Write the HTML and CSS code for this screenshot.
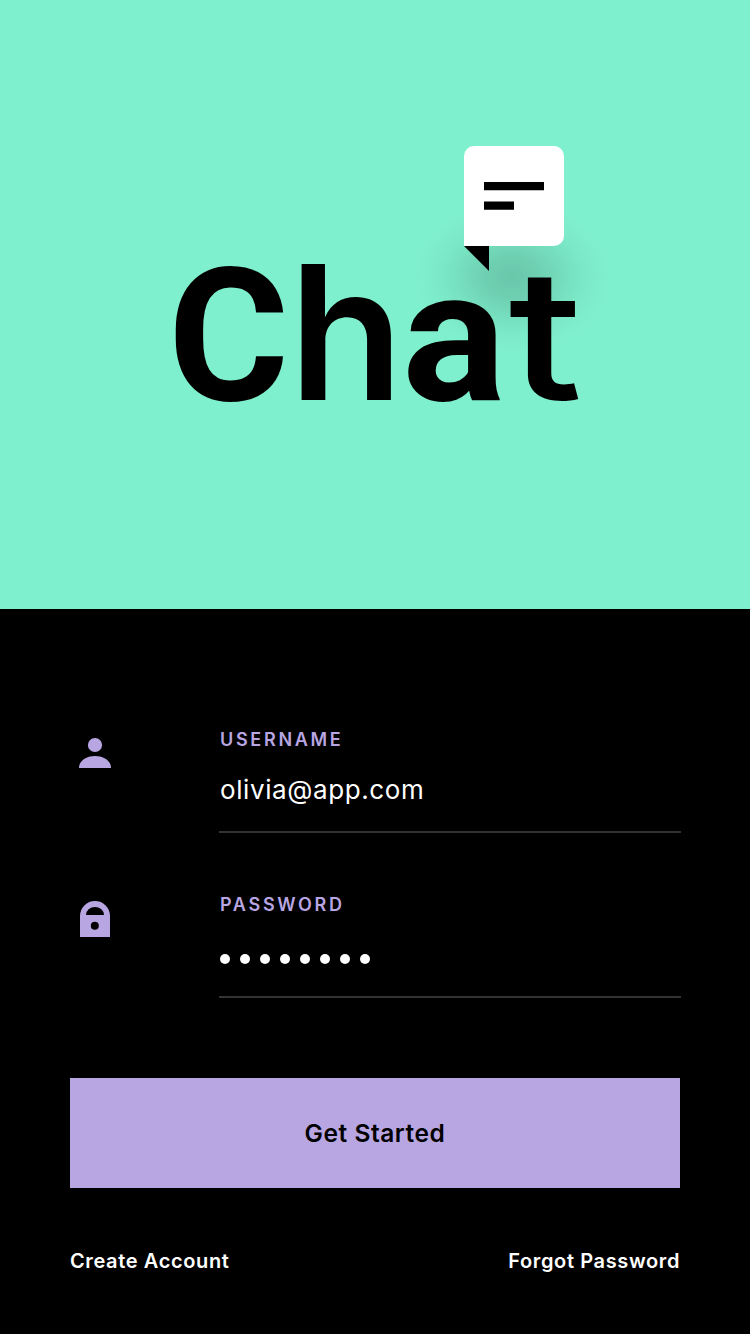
FILE: index.html
```html
<!DOCTYPE html>
<html lang="en">
<head>
<meta charset="utf-8">
<title>Chat</title>
<link rel="stylesheet" href="styles.css">
</head>
<body>
<main class="screen">
  <header class="hero">
    <svg class="logo" width="480" height="400" viewBox="140 120 480 400" role="img" aria-label="Chat">
      <defs>
        <radialGradient id="shade">
          <stop offset="0" stop-opacity=".17"/>
          <stop offset=".25" stop-opacity=".14"/>
          <stop offset=".5" stop-opacity=".08"/>
          <stop offset=".75" stop-opacity=".025"/>
          <stop offset="1" stop-opacity="0"/>
        </radialGradient>
      </defs>
      <ellipse cx="512" cy="277" rx="100" ry="77" fill="url(#shade)"/>
      <text class="wordmark" y="400"><tspan class="cap" x="168">C</tspan><tspan class="h" x="289">h</tspan><tspan class="a" x="402" textLength="104" lengthAdjust="spacingAndGlyphs">a</tspan><tspan class="t" x="508.500" textLength="74" lengthAdjust="spacingAndGlyphs">t</tspan></text>
      <path d="M474 146H554A10 10 0 0 1 564 156V236A10 10 0 0 1 554 246H464V156A10 10 0 0 1 474 146Z" fill="#fff"/>
      <path d="M464 246H489V271Z"/>
      <path d="M484 182H544V190.2H484ZM484 201.600H514V209.800H484Z"/>
    </svg>
  </header>
  <form class="login">
    <div class="field">
      <svg class="icon" width="50" height="50" viewBox="0 0 50 50"><circle cx="25" cy="16" r="7.100"/><path d="M9 39C9 32 16 27 25 27S41 32 41 39Z"/></svg>
      <div class="entry">
        <span class="label user">USERNAME</span>
        <span class="value">olivia@app.com</span>
      </div>
    </div>
    <div class="field">
      <svg class="icon" width="50" height="50" viewBox="0 0 50 50"><path fill-rule="evenodd" d="M10 43V22A15 15 0 0 1 40 22V43ZM16 21H34A9 8 0 0 0 16 21ZM24.800 27.800A4 4 0 1 0 24.800 35.800A4 4 0 1 0 24.800 27.800Z"/></svg>
      <div class="entry">
        <span class="label pass">PASSWORD</span>
        <span class="dots"><i></i><i></i><i></i><i></i><i></i><i></i><i></i><i></i></span>
      </div>
    </div>
    <button class="submit" type="button"><span>Get Started</span></button>
    <nav class="links"><a class="create">Create Account</a><a class="forgot">Forgot Password</a></nav>
  </form>
</main>
</body>
</html>
```
FILE: styles.css
```css
* { box-sizing: border-box; }
body { margin: 0; background: #000; font-family: Inter, Roboto, sans-serif; }
.screen { width: 750px; height: 1334px; overflow: hidden; background: #000; }
.hero { height: 609px; padding: 120px 130px 0 140px; background: #7ff0cd; }
.logo { display: block; }
.wordmark { font-size: 185px; font-weight: 600; }
.cap, .a { font-family: Roboto, sans-serif; font-weight: 700; }
.h { font-size: 187px; }
.t { font-size: 182px; font-weight: 500; }
.login { padding: 120px 69px 0 70px; }
.field { display: flex; height: 165px; }
.icon { flex: none; margin-right: 99px; fill: #b8a6e3; }
.entry { display: flex; flex-direction: column; width: 462px; height: 104px; border-bottom: 2px solid #333; padding-left: 1px; }
.label { color: #b8a6e3; font-size: 18px; line-height: 22px; font-weight: 600; letter-spacing: 2.7px; }
.value { margin-top: 22px; color: #fff; font-size: 26px; line-height: 34px; font-weight: 400; letter-spacing: .6px; }
.dots { display: flex; gap: 10px; margin-top: 38px; }
.dots i { width: 10px; height: 10px; border-radius: 50%; background: #fff; }
.submit { display: block; width: 610px; height: 110px; margin-top: 19px; padding: 0; border: 0; background: #b8a6e3; color: #000; font: 600 24.5px/30px Inter, Roboto, sans-serif; letter-spacing: .55px; }
.links { display: flex; justify-content: space-between; width: 610px; margin-top: 60px; color: #fff; font-size: 20px; line-height: 26px; font-weight: 600; letter-spacing: .62px; }
```
